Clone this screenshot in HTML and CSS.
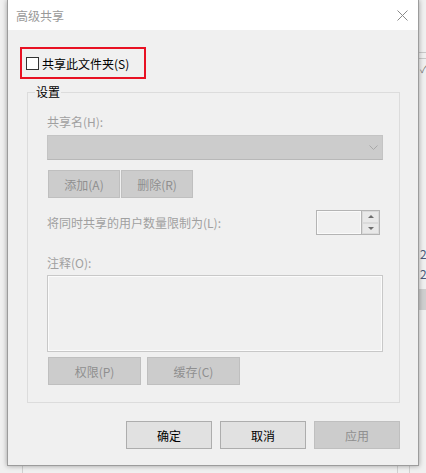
FILE: index.html
```html
<!DOCTYPE html>
<html lang="zh-CN">
<head>
<meta charset="UTF-8" />
<title>高级共享</title>
<link rel="stylesheet" href="styles.css">
</head>
<body>
  <div class="backdrop">
    <div class="bd-line l1"></div>
    <div class="bd-line l2"></div>
    <div class="bd-check">✓</div>
    <div class="bd-text t1">24</div>
    <div class="bd-text t2">27</div>
    <div class="bd-band"></div>
    <div class="bd-vline v1"></div>
    <div class="bd-vline v2"></div>
    <div class="bd-vline v3"></div>
  </div>

  <div class="dialog">
    <div class="titlebar">
      <span class="title">高级共享</span>
      <svg class="close" width="11" height="11" viewBox="0 0 11 11">
        <path d="M0.5 0.5 L10.5 10.5 M10.5 0.5 L0.5 10.5" stroke="#8a8a8a" stroke-width="1" fill="none"/>
      </svg>
    </div>

    <div class="content">
      <div class="share-toggle">
        <span class="checkbox"></span>
        <span>共享此文件夹(S)</span>
      </div>

      <div class="group">
        <span class="legend">设置</span>

        <div class="label">共享名(H):</div>
        <div class="combo">
          <svg width="9" height="5" viewBox="0 0 9 5">
            <path d="M0.5 0.5 L4.5 4.5 L8.5 0.5" stroke="#a8a8a8" fill="none"/>
          </svg>
        </div>
        <div class="btn-row tight">
          <button class="btn small" disabled>添加(A)</button>
          <button class="btn small" disabled>删除(R)</button>
        </div>

        <div class="limit-row">
          <span class="label">将同时共享的用户数量限制为(L):</span>
          <div class="spin">
            <div class="spin-field"></div>
            <div class="spin-btns">
              <div class="spin-btn"><span class="arrow up"></span></div>
              <div class="spin-btn"><span class="arrow down"></span></div>
            </div>
          </div>
        </div>

        <div class="label note-label">注释(O):</div>
        <div class="note"></div>
        <div class="btn-row wide">
          <button class="btn medium" disabled>权限(P)</button>
          <button class="btn medium" disabled>缓存(C)</button>
        </div>
      </div>

      <div class="footer">
        <button class="btn action">确定</button>
        <button class="btn action">取消</button>
        <button class="btn action" disabled>应用</button>
      </div>
    </div>
  </div>
</body>
</html>
```

FILE: styles.css
```css
body {
  margin: 0;
  width: 426px;
  height: 473px;
  overflow: hidden;
  background: #e6e6e6;
  font-family: "Noto Sans CJK SC", "Noto Sans", sans-serif;
  font-size: 12px;
  position: relative;
}
.backdrop {
  position: absolute;
  inset: 0;
  background: #f0f0f0;
}
.bd-line {
  position: absolute;
  left: 419px;
  width: 10px;
  height: 1px;
  background: #c8c8c8;
}
.bd-line.l1 { top: 52px; }
.bd-line.l2 { top: 58px; }
.bd-check {
  position: absolute;
  left: 420px;
  top: 63px;
  color: #777;
  font-size: 10px;
  line-height: 12px;
}
.bd-text {
  position: absolute;
  left: 420px;
  color: #4a5a7a;
  font-size: 12px;
  line-height: 14px;
}
.bd-text.t1 { top: 247px; }
.bd-text.t2 { top: 267px; }
.bd-band {
  position: absolute;
  left: 419px;
  top: 289px;
  width: 10px;
  height: 21px;
  background: #cfcfcf;
}
.bd-vline {
  position: absolute;
  top: 466px;
  width: 1px;
  height: 10px;
  background: #d0d0d0;
}
.bd-vline.v1 { left: 22px; }
.bd-vline.v2 { left: 397px; }
.bd-vline.v3 { left: 409px; }

.dialog {
  position: relative;
  margin-left: 7px;
  width: 412px;
  height: 466px;
  box-sizing: border-box;
  border: 1px solid #9c9c9c;
  border-top: none;
  background: #f0f0f0;
  box-shadow: 0 0 5px rgba(0,0,0,0.35);
  display: flex;
  flex-direction: column;
}
.titlebar {
  height: 30px;
  background: #fff;
  display: flex;
  align-items: center;
  justify-content: space-between;
  padding: 0 10px 0 8px;
}
.title {
  color: #999;
  font-size: 12px;
}
.content {
  padding: 17px 0 0 12px;
}
.share-toggle {
  width: 126px;
  height: 32px;
  box-sizing: border-box;
  border: 2px solid #e81123;
  display: flex;
  align-items: center;
  gap: 3px;
  padding-left: 4px;
  color: #000;
}
.checkbox {
  width: 13px;
  height: 13px;
  box-sizing: border-box;
  border: 1px solid #333;
  background: #fff;
}
.group {
  position: relative;
  margin: 13px 0 0 7px;
  width: 373px;
  height: 311px;
  box-sizing: border-box;
  border: 1px solid #dcdcdc;
  padding: 21px 0 0 19px;
}
.legend {
  position: absolute;
  top: -8px;
  left: 7px;
  padding: 0 1px;
  background: #f0f0f0;
  color: #000;
  line-height: 14px;
}
.label {
  color: #a0a0a0;
  line-height: 16px;
}
.combo {
  margin-top: 5px;
  width: 336px;
  height: 25px;
  box-sizing: border-box;
  background: #cccccc;
  border: 1px solid #c4c4c4;
  border-bottom-color: #b8b8b8;
  display: flex;
  align-items: center;
  justify-content: flex-end;
  padding-right: 4px;
}
.btn-row {
  display: flex;
  margin-left: 1px;
}
.btn-row.tight {
  margin-top: 10px;
  gap: 1px;
}
.btn-row.wide {
  margin-top: 5px;
  gap: 6px;
}
.btn {
  font-family: inherit;
  font-size: 12px;
  height: 28px;
  box-sizing: border-box;
  border: 1px solid #adadad;
  background: #e1e1e1;
  color: #000;
  padding: 0;
}
.btn:disabled {
  background: #cccccc;
  border-color: #bfbfbf;
  color: #8f8f8f;
}
.btn.small { width: 72px; }
.btn.medium { width: 93px; }
.btn.action { width: 86px; }
.limit-row {
  margin-top: 12px;
  width: 333px;
  height: 25px;
  display: flex;
  align-items: center;
  justify-content: space-between;
}
.spin {
  width: 64px;
  height: 25px;
  box-sizing: border-box;
  border: 1px solid #b4b4b4;
  display: flex;
}
.spin-field {
  flex: 1;
  border: 1px solid #fafafa;
  background: #f0f0f0;
}
.spin-btns {
  width: 17px;
  display: flex;
  flex-direction: column;
  border-left: 1px solid #b4b4b4;
}
.spin-btn {
  flex: 1;
  background: #e8e8e8;
  border: 1px solid #dadada;
  display: flex;
  align-items: center;
  justify-content: center;
}
.arrow {
  width: 0;
  height: 0;
  border-left: 3px solid transparent;
  border-right: 3px solid transparent;
}
.arrow.up { border-bottom: 3px solid #6d6d6d; }
.arrow.down { border-top: 3px solid #6d6d6d; }
.note-label {
  margin-top: 20px;
}
.note {
  margin-top: 4px;
  width: 336px;
  height: 77px;
  box-sizing: border-box;
  border: 1px solid #c8c8c8;
  box-shadow: inset 0 0 0 1px #fbfbfb;
  background: #f0f0f0;
}
.footer {
  margin-top: 18px;
  width: 380px;
  display: flex;
  justify-content: flex-end;
  gap: 8px;
}
```
